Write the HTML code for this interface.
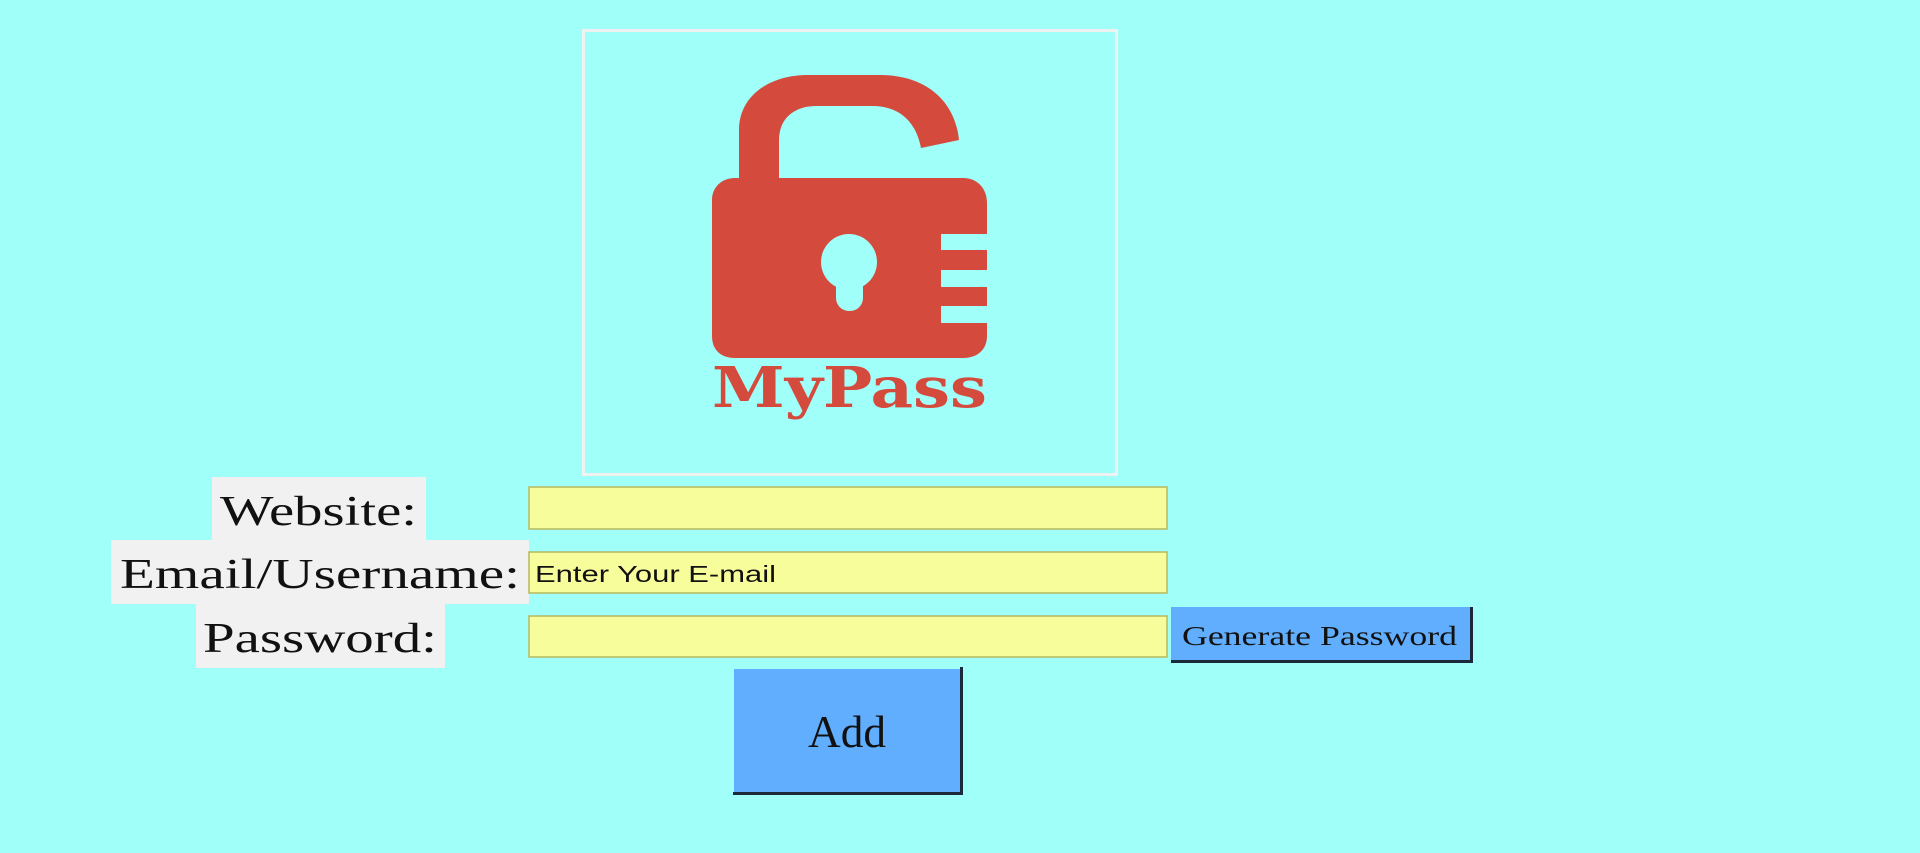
<!DOCTYPE html>
<html><head><meta charset="utf-8"><style>
html,body{margin:0;padding:0;background:#a0fff8;width:1920px;height:853px;overflow:hidden}
svg{display:block}
</style></head><body>
<svg width="1920" height="853" viewBox="0 0 1920 853" xmlns="http://www.w3.org/2000/svg">
<rect width="1920" height="853" fill="#a0fff8"/>
<rect x="583.5" y="30.5" width="533" height="444" fill="none" stroke="#eef3f2" stroke-width="3"/>
<g fill="#d44a3c">
<path d="M739 180 V130 C739 97 768 75 808 75 H880 C925 75 955 100 959 140 L921 148 C916 122 900 106 872 106 H816 C795 106 779 118 779 140 V180 Z"/>
<path d="M735 178 H963 C977 178 987 188 987 203 V234 H941 V250 H987 V270 H941 V287 H987 V306 H941 V323 H987 V336 C987 350 977 358 963 358 H735 C721 358 712 350 712 336 V200 C712 188 721 178 735 178 Z"/>
<text x="712" y="407" font-family="'DejaVu Serif','Liberation Serif',serif" font-weight="bold" font-size="56" textLength="275" lengthAdjust="spacingAndGlyphs">MyPass</text>
</g>
<circle cx="849" cy="262" r="28" fill="#a0fff8"/>
<rect x="836" y="265" width="27" height="46" rx="13" fill="#a0fff8"/>
<rect x="212" y="477" width="214" height="63" fill="#f1f1f1"/>
<rect x="111" y="540" width="418" height="64" fill="#f1f1f1"/>
<rect x="196" y="604" width="249" height="64" fill="#f1f1f1"/>
<g font-family="'Liberation Serif',serif" font-size="42" fill="#111">
<text x="220" y="525" textLength="197" lengthAdjust="spacingAndGlyphs">Website:</text>
<text x="120" y="588" textLength="400" lengthAdjust="spacingAndGlyphs">Email/Username:</text>
<text x="203" y="652" textLength="234" lengthAdjust="spacingAndGlyphs">Password:</text>
</g>
<g fill="#f8fd9c" stroke="#b8b860" stroke-width="1.5">
<rect x="529" y="487" width="638" height="42"/>
<rect x="529" y="552" width="638" height="41"/>
<rect x="529" y="616" width="638" height="41"/>
</g>
<text x="535" y="582" font-family="'Liberation Sans',sans-serif" font-size="23" fill="#111" textLength="241" lengthAdjust="spacingAndGlyphs">Enter Your E-mail</text>
<rect x="1171" y="607" width="302" height="56" fill="#62aefe"/>
<path d="M1471.5 607 V661.5 H1171" fill="none" stroke="#1a2a3a" stroke-width="3"/>
<text x="1182" y="645" font-family="'Liberation Serif',serif" font-size="27" fill="#111" textLength="275" lengthAdjust="spacingAndGlyphs">Generate Password</text>
<rect x="734" y="669" width="229" height="126" fill="#62aefe"/>
<path d="M961.5 667 V793.5 H733" fill="none" stroke="#1a2a3a" stroke-width="3"/>
<text x="847" y="747" text-anchor="middle" font-family="'Liberation Serif',serif" font-size="46" fill="#111" textLength="78" lengthAdjust="spacingAndGlyphs">Add</text>
</svg>
</body></html>
